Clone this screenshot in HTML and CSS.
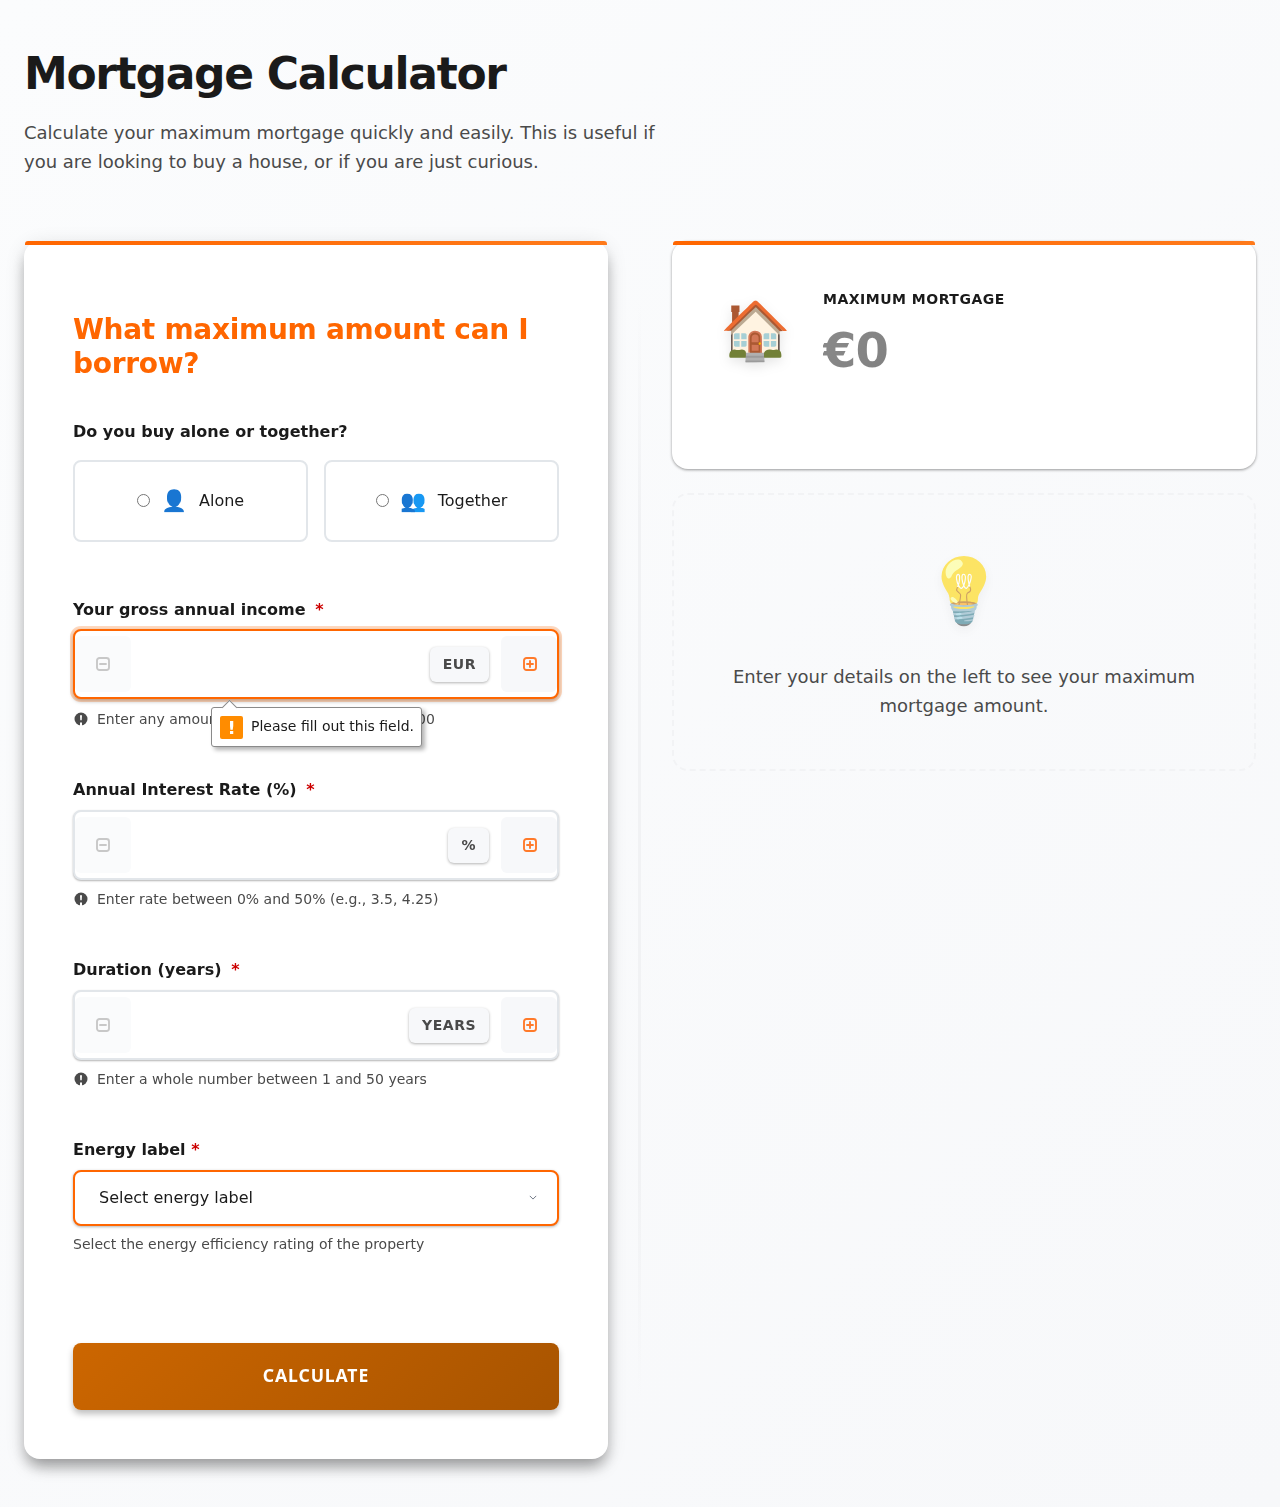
FILE: index.html
```html
<!DOCTYPE html>
<html lang="en">
<head>
<meta charset="utf-8">
<title>Mortgage Calculator</title>
<link rel="stylesheet" href="styles.css">
</head>
<body>
<main class="page">
  <header class="intro">
    <h1>Mortgage Calculator</h1>
    <p>Calculate your maximum mortgage quickly and easily. This is useful if you are looking to buy a house, or if you are just curious.</p>
  </header>
  <div class="columns">
    <form class="card form-card">
      <h2>What maximum amount can I borrow?</h2>
      <div class="group group-buy">
        <div class="label">Do you buy alone or together?</div>
        <div class="choices">
          <label class="choice"><span class="radio"></span><span class="emoji">👤</span><span>Alone</span></label>
          <label class="choice"><span class="radio"></span><span class="emoji">👥</span><span>Together</span></label>
        </div>
      </div>
      <div class="group">
        <div class="label">Your gross annual income <span class="req">*</span></div>
        <div class="field field-active">
          <span class="step step-minus"><svg viewBox="0 0 14 14" class="icon"><rect x="1" y="1" width="12" height="12" rx="2.5"/><path d="M4 7h6"/></svg></span>
          <span class="spacer"></span>
          <span class="unit">EUR</span>
          <span class="step step-plus"><svg viewBox="0 0 14 14" class="icon"><rect x="1" y="1" width="12" height="12" rx="2.5"/><path d="M4 7h6M7 4v6"/></svg></span>
        </div>
        <div class="hint"><svg viewBox="0 0 14 14" class="info"><circle cx="7" cy="7" r="6.5"/><path class="mark" d="M6 3.2h2l-.3 5H6.300zM6 10.600h2v3.400H6z"/></svg><span>Enter any amount between €1 and €10,000,000</span></div>
        <div class="tooltip"><span class="tip-icon">!</span><span class="tip-text">Please fill out this field.</span></div>
      </div>
      <div class="group">
        <div class="label">Annual Interest Rate (%) <span class="req">*</span></div>
        <div class="field">
          <span class="step step-minus"><svg viewBox="0 0 14 14" class="icon"><rect x="1" y="1" width="12" height="12" rx="2.5"/><path d="M4 7h6"/></svg></span>
          <span class="spacer"></span>
          <span class="unit">%</span>
          <span class="step step-plus"><svg viewBox="0 0 14 14" class="icon"><rect x="1" y="1" width="12" height="12" rx="2.5"/><path d="M4 7h6M7 4v6"/></svg></span>
        </div>
        <div class="hint"><svg viewBox="0 0 14 14" class="info"><circle cx="7" cy="7" r="6.5"/><path class="mark" d="M6 3.2h2l-.3 5H6.300zM6 10.600h2v3.400H6z"/></svg><span>Enter rate between 0% and 50% (e.g., 3.5, 4.25)</span></div>
      </div>
      <div class="group">
        <div class="label">Duration (years) <span class="req">*</span></div>
        <div class="field">
          <span class="step step-minus"><svg viewBox="0 0 14 14" class="icon"><rect x="1" y="1" width="12" height="12" rx="2.5"/><path d="M4 7h6"/></svg></span>
          <span class="spacer"></span>
          <span class="unit">YEARS</span>
          <span class="step step-plus"><svg viewBox="0 0 14 14" class="icon"><rect x="1" y="1" width="12" height="12" rx="2.5"/><path d="M4 7h6M7 4v6"/></svg></span>
        </div>
        <div class="hint"><svg viewBox="0 0 14 14" class="info"><circle cx="7" cy="7" r="6.5"/><path class="mark" d="M6 3.2h2l-.3 5H6.300zM6 10.600h2v3.400H6z"/></svg><span>Enter a whole number between 1 and 50 years</span></div>
      </div>
      <div class="group group-select">
        <div class="label">Energy label <span class="req req-tight">*</span></div>
        <div class="select"><span>Select energy label</span><svg viewBox="0 0 10 6" class="chev"><path d="M1 1l4 4 4-4"/></svg></div>
        <div class="hint hint-plain">Select the energy efficiency rating of the property</div>
      </div>
      <button type="button" class="submit">CALCULATE</button>
    </form>
    <aside class="side">
      <section class="card result-card">
        <span class="house">🏠</span>
        <div class="result-text">
          <div class="result-label">MAXIMUM MORTGAGE</div>
          <div class="result-value">€0</div>
        </div>
      </section>
      <section class="placeholder">
        <div class="bulb">💡</div>
        <p>Enter your details on the left to see your maximum mortgage amount.</p>
      </section>
    </aside>
  </div>
</main>
</body>
</html>
```
FILE: styles.css
```css
* { box-sizing: border-box; }
html, body { margin: 0; padding: 0; }
body {
  font-family: "DejaVu Sans", "Noto Color Emoji", sans-serif;
  color: #1a1a1a;
  background: linear-gradient(135deg, #fbfcfd, #f7f8fa);
}
.page { padding: 48px 24px; min-height: 1507px; }
.intro { margin-bottom: 64px; }
h1 { margin: 0 0 18.6px; font-size: 44px; line-height: 1.2; font-weight: 700; letter-spacing: -0.03em; color: #1a1a1a; }
.intro p { margin: 0; max-width: 640px; font-size: 18px; line-height: 1.6; color: #4a4a4a; }
.columns { position: relative; display: grid; grid-template-columns: 584px 584px; gap: 64px; align-items: start; }
.columns::before {
  content: "";
  position: absolute;
  left: calc(50% - 2px); top: 60px; bottom: 60px;
  width: 3px;
  background: linear-gradient(180deg, rgba(236,238,241,0), #f1f2f4 20%, #f1f2f4 80%, rgba(236,238,241,0));
}
.card {
  position: relative;
  background: #fff;
  border-radius: 16px;
  will-change: transform;
}
.card::before {
  content: "";
  position: absolute;
  left: 1px; right: 1px; top: 0;
  height: 4px;
  border-radius: 3px 3px 0 0;
  background: linear-gradient(90deg, #ff6600, #ff7a1a);
}
.form-card {
  padding: 72px 49px 49px;
  box-shadow: 0 10px 15px -3px rgba(0,0,0,.35), 0 4px 20px rgba(0,0,0,.12);
}
h2 { margin: 0 0 40px; font-size: 28px; line-height: 33.6px; font-weight: 700; letter-spacing: -0.01em; color: #ff6600; }
.group { position: relative; margin-bottom: 48px; }
.group-buy { margin-bottom: 56px; }
.group-select { margin-bottom: 88px; }
.label { font-size: 16px; font-weight: 700; line-height: 24px; margin-bottom: 8px; color: #1a1a1a; }
.req { color: #cc0000; margin-left: 4px; }
.req-tight { margin-left: 0; }
.choices { display: grid; grid-template-columns: 1fr 1fr; gap: 16px; margin-top: 16px; }
.choice {
  display: flex; align-items: center; justify-content: center; gap: 8px;
  height: 82px;
  padding-bottom: 2px;
  border: 2px solid #e2e6ea;
  border-radius: 8px;
  font-size: 16px;
  color: #1a1a1a;
  background: #fff;
}
.radio { width: 13px; height: 13px; border: 1px solid #767676; border-radius: 50%; margin-right: 4px; }
.emoji { font-size: 21px; margin: 3px 3px 0 0; line-height: 1; }
.field {
  display: flex; align-items: center;
  height: 70px;
  padding: 5px 0;
  border: 2px solid #e2e6ea;
  border-radius: 8px;
  background: #fff;
  box-shadow: 0 1px 2px rgba(0,0,0,.3);
}
.field-active {
  margin-top: -1px;
  border-color: #ff6600;
  box-shadow: 0 0 0 3px rgba(255,102,0,.25), 0 2px 4px rgba(0,0,0,.35);
}
.field-active + .hint { margin-top: 9px; }
.step { width: 56px; align-self: stretch; display: flex; align-items: center; justify-content: center; border-radius: 6px; }
.step-minus { background: #fafbfc; padding-right: 1px; }
.step-plus { background: #f7f8fa; padding-left: 1px; }
.icon { width: 14px; height: 14px; fill: none; stroke-width: 1.9; stroke-linecap: round; }
.step-minus .icon { stroke: #c8c8c8; }
.step-plus .icon { stroke: #ff7a2a; }
.spacer { flex: 1; }
.unit {
  margin-right: 12px;
  padding: 8px 13px;
  height: 35px;
  font-size: 14px; line-height: 19px; font-weight: 700; letter-spacing: .5px;
  color: #4a4a4a;
  background: #f7f8fa;
  border-radius: 6px;
  box-shadow: 0 1px 3px rgba(0,0,0,.3);
}
.hint { display: flex; align-items: center; gap: 9px; margin-top: 8px; font-size: 14px; line-height: 22px; color: #4a4a4a; }
.info { width: 14px; height: 14px; flex: none; margin-left: 1px; }
.info circle { fill: #4a4a4a; }
.info .mark { fill: #fff; }
.hint-plain { display: block; margin-top: 7px; }
.tooltip {
  position: absolute;
  left: 138px; top: 109px;
  display: flex; align-items: center; gap: 8px;
  height: 40px;
  padding: 0 7px 0 8px;
  background: #fff;
  border: 1px solid #8a8a8a;
  border-radius: 3px;
  font-size: 14px;
  color: #1a1a1a;
  box-shadow: 3px 3px 4px rgba(0,0,0,.3);
  white-space: nowrap;
}
.tip-text { margin-bottom: 2px; }
.tooltip::before {
  content: "";
  position: absolute;
  left: 12px; top: -6px;
  width: 10px; height: 10px;
  background: #fff;
  border-left: 1px solid #8a8a8a;
  border-top: 1px solid #8a8a8a;
  transform: rotate(45deg);
}
.tip-icon {
  width: 23px; height: 23px;
  background: #ff8c00;
  color: #fff;
  border-radius: 2px;
  font-weight: 700;
  font-size: 18px;
  line-height: 23px;
  text-align: center;
}
.select {
  display: flex; align-items: center; justify-content: space-between;
  height: 56px;
  padding: 0 20px 2px 24px;
  border: 2px solid #ff6600;
  border-radius: 8px;
  font-size: 16px;
  color: #1a1a1a;
  background: #fff;
  box-shadow: 0 1px 3px rgba(0,0,0,.3);
}
.chev { width: 8px; height: 5px; fill: none; stroke: #6b7280; stroke-width: 1.2; }
.submit {
  display: block; width: 100%; height: 67px;
  padding: 0 0 4px;
  border: 0; border-radius: 8px;
  background: linear-gradient(135deg, #cc6600, #a85400);
  color: #fff;
  font-family: "Noto Sans", sans-serif;
  font-size: 17.6px; font-weight: 700; letter-spacing: .05em;
  box-shadow: 0 4px 6px rgba(0,0,0,.25);
}
.side { display: flex; flex-direction: column; gap: 24px; }
.result-card {
  display: flex; align-items: flex-start; gap: 32px;
  height: 228px;
  padding: 48px;
  box-shadow: 0 1px 3px rgba(0,0,0,.4);
}
.house { margin-top: 7px; font-size: 57px; line-height: 1.2; filter: drop-shadow(0 4px 6px rgba(0,0,0,.1)); }
.result-label { font-size: 14px; line-height: 20px; font-weight: 700; letter-spacing: .5px; color: #1a1a1a; }
.result-value {
  margin-top: 13px;
  font-size: 48px; line-height: 1.2; font-weight: 700; letter-spacing: -1px;
  background: linear-gradient(135deg, #8a8a8a, #777);
  -webkit-background-clip: text;
  background-clip: text;
  color: transparent;
}
.placeholder {
  height: 278px;
  padding: 58px 48px 48px;
  border: 2px dashed #f2f3f5;
  border-radius: 16px;
  text-align: center;
}
.bulb { font-size: 64px; line-height: 1.2; margin-bottom: 33px; opacity: .6; filter: drop-shadow(0 4px 6px rgba(0,0,0,.08)); }
.placeholder p { margin: 0; font-size: 18px; line-height: 1.6; color: #4a4a4a; }
```
